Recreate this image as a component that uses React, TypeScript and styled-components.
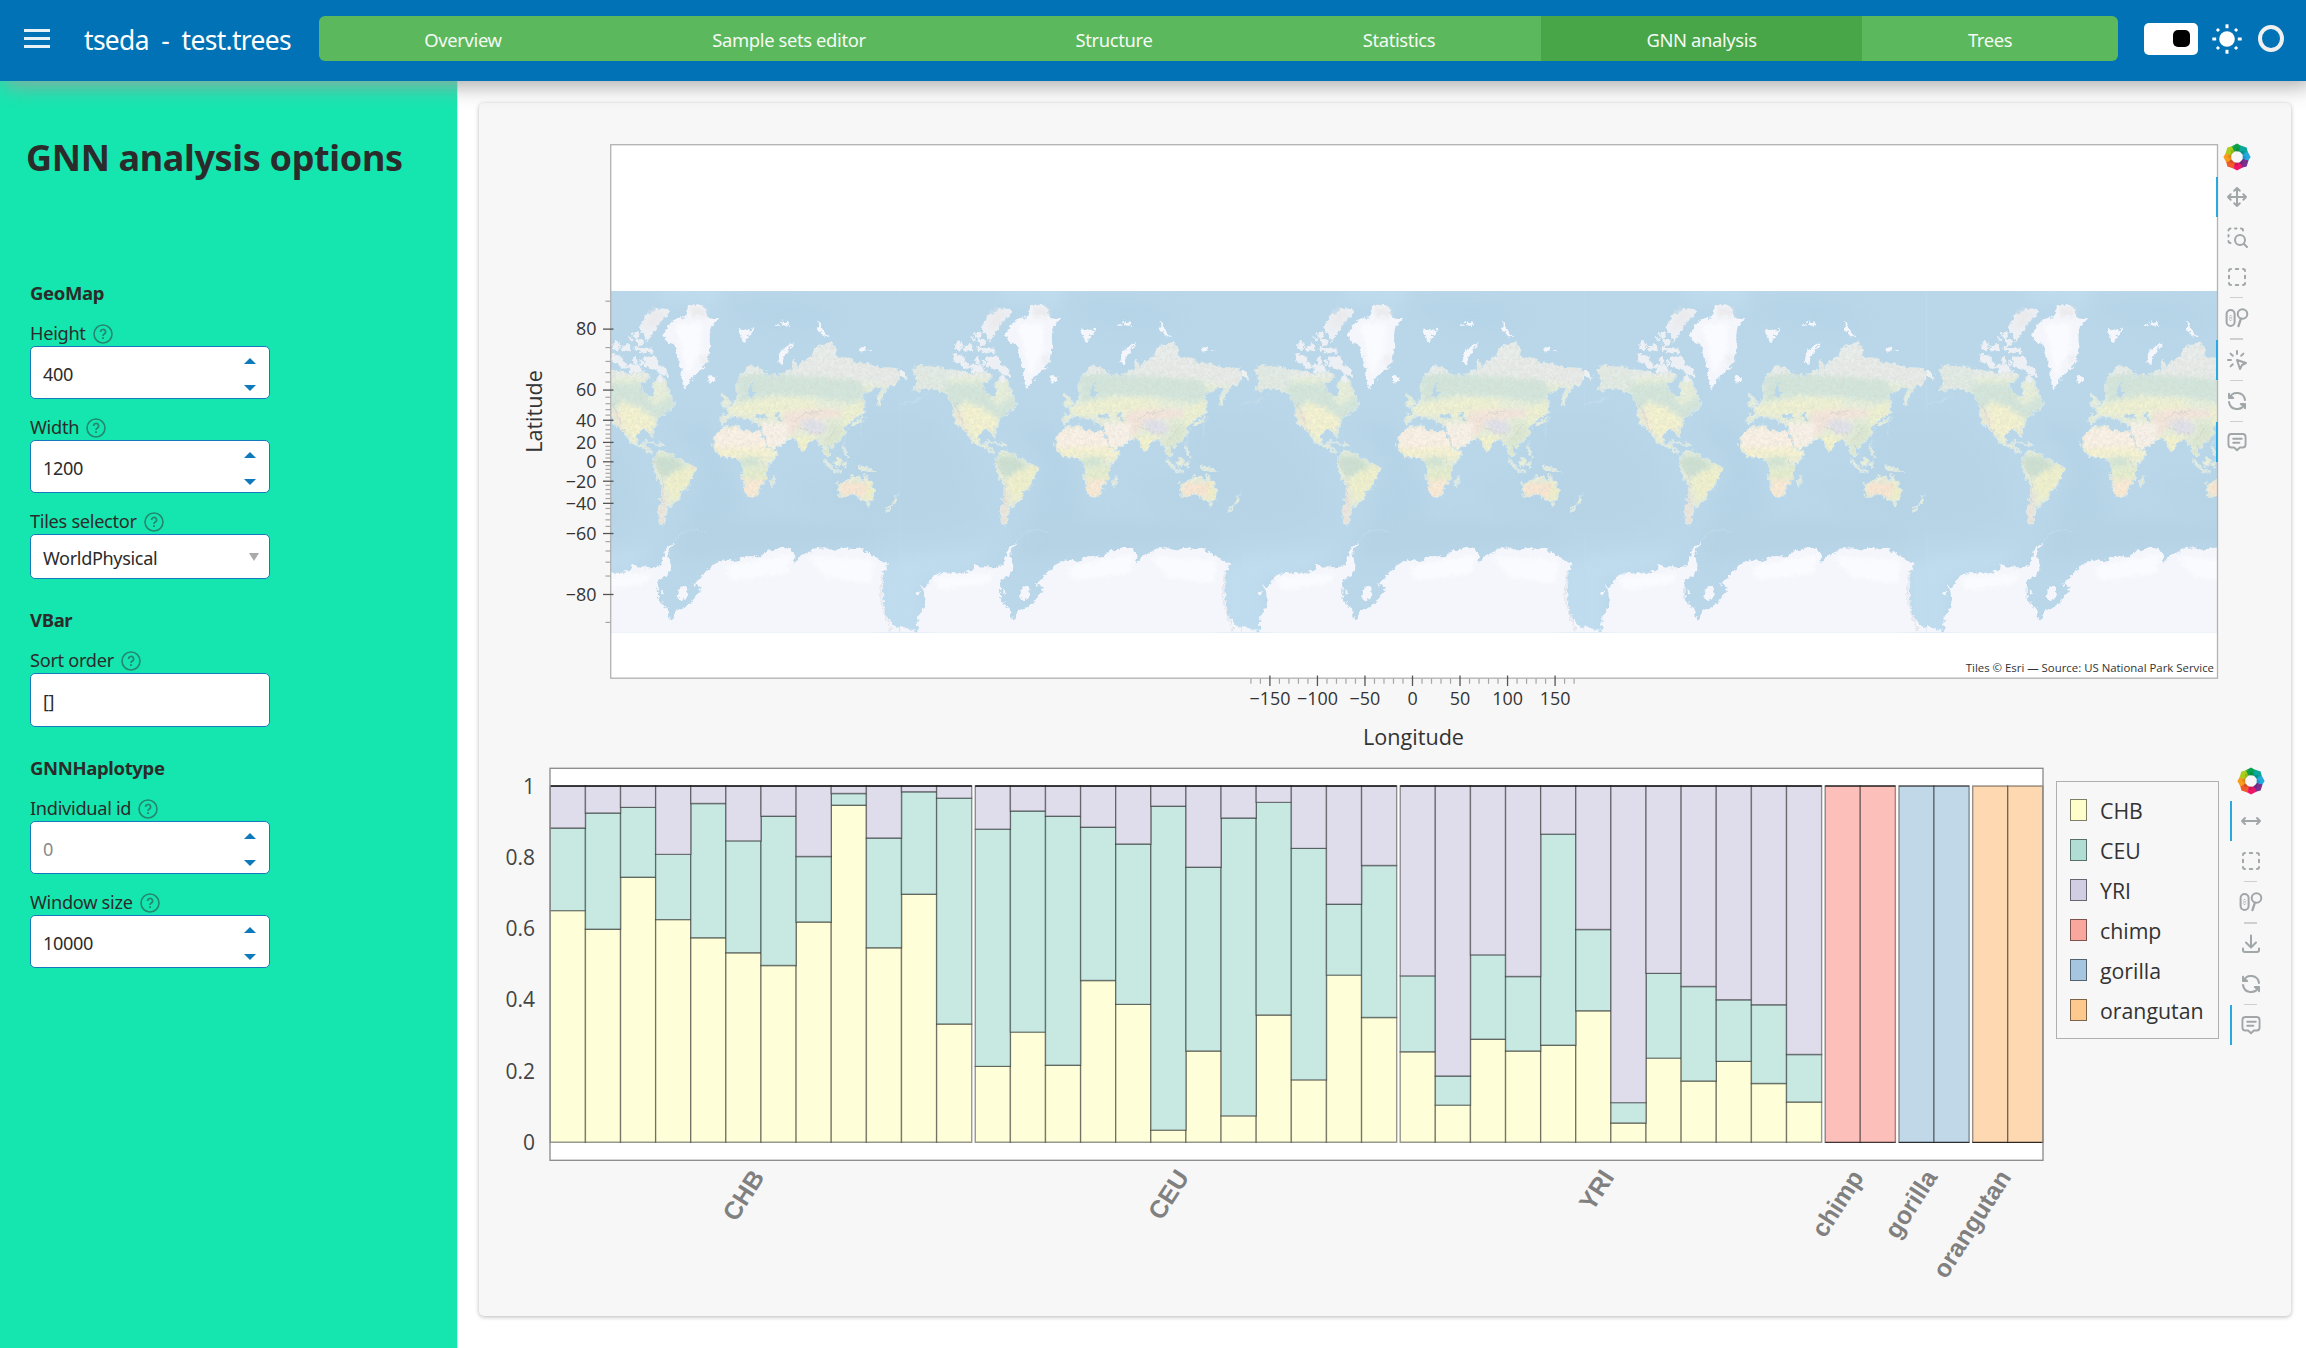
import React from "react";
import styled, { createGlobalStyle, css } from "styled-components";

const GlobalStyle = createGlobalStyle`
  *, *::before, *::after { box-sizing: border-box; }
  html, body { margin: 0; padding: 0; background: #fff; }
  body {
    width: 2306px;
    height: 1348px;
    overflow: hidden;
    font-family: "Noto Sans", "Open Sans", sans-serif;
    color: #2b2b2b;
  }
`;

const plotFont = `"Open Sans", "Noto Sans", sans-serif`;

/* ---------- page shell ---------- */

const Page = styled.div`
  display: flex;
  flex-direction: column;
  width: 2306px;
  height: 1348px;
`;

const Header = styled.header`
  display: flex;
  align-items: center;
  flex: none;
  height: 81px;
  padding: 0 21px 4px 24px;
  background: #0072b5;
  color: #fff;
  box-shadow: 5px 5px 20px rgba(160, 160, 160, 0.9);
  z-index: 2;
`;

const Burger = styled.div`
  display: flex;
  flex-direction: column;
  gap: 5px;
  width: 26px;
  margin-right: 34px;
`;

const BurgerLine = styled.span`
  height: 3px;
  background: #e6f1f8;
`;

const AppTitle = styled.div`
  width: 235px;
  flex: none;
  padding-top: 2px;
  font-size: 26.4px;
  line-height: 36px;
  letter-spacing: -0.65px;
  white-space: pre;
`;

const Tabs = styled.nav`
  display: flex;
  width: 1799px;
  height: 45px;
  border-radius: 6px;
  overflow: hidden;
  background: #5cb85c;
`;

const Tab = styled.div<{ $w: number; $active?: boolean }>`
  display: flex;
  align-items: center;
  justify-content: center;
  width: ${(p) => p.$w}px;
  padding-top: 2px;
  background: ${(p) => (p.$active ? "#48a548" : "transparent")};
  color: #f4faf4;
  font-size: 18.4px;
  letter-spacing: -0.37px;
`;

const Toggle = styled.div`
  display: flex;
  align-items: center;
  justify-content: flex-end;
  width: 54px;
  height: 32px;
  margin-left: 26px;
  padding-right: 8px;
  border-radius: 5px;
  background: #fff;
`;

const Knob = styled.span`
  width: 17px;
  height: 17px;
  border-radius: 5px;
  background: #000;
`;

const SunIcon = styled.svg`
  width: 30px;
  height: 30px;
  margin-left: 14px;
`;

const Busy = styled.span`
  width: 26px;
  height: 27px;
  margin-left: 16px;
  border: 4px solid #f0f0f0;
  border-radius: 50%;
`;

const Body = styled.div`
  display: flex;
  flex: 1;
  min-height: 0;
`;

/* ---------- sidebar ---------- */

const Sidebar = styled.aside`
  width: 458px;
  flex: none;
  padding: 0 30px;
  background: #15e6af;
  border-right: 1px solid #e0e4e3;
`;

const SideTitle = styled.h1`
  height: 171px;
  margin: 0 -10px 0 -4px;
  padding-top: 53px;
  font-size: 36px;
  line-height: 48px;
  font-weight: 700;
  letter-spacing: -0.35px;
  white-space: nowrap;
`;

const GroupTitle = styled.h2`
  height: 67px;
  margin: 0;
  padding-top: 29px;
  font-size: 18.5px;
  line-height: 24px;
  font-weight: 700;
  letter-spacing: -0.35px;
`;

const Fields = styled.div`
  display: flex;
  flex-direction: column;
  gap: 14px;
  width: 240px;
`;

const FieldLabel = styled.label`
  display: flex;
  align-items: center;
  gap: 7px;
  height: 27px;
  padding-top: 1px;
  font-size: 18.2px;
  line-height: 26px;
  letter-spacing: -0.3px;
`;

const HelpSvg = styled.svg`
  width: 20px;
  height: 20px;
  margin-top: 2px;
  opacity: 0.6;
`;

const InputBox = styled.div<{ $h: number }>`
  display: flex;
  align-items: center;
  justify-content: space-between;
  height: ${(p) => p.$h}px;
  padding: 2px 13px 0 12px;
  border: 1px solid #1679bd;
  border-radius: 5px;
  background: #fff;
`;

const InputText = styled.span<{ $muted?: boolean }>`
  color: ${(p) => (p.$muted ? "#8a8a8a" : "#2b2b2b")};
  font-size: 18.1px;
  line-height: 24px;
  letter-spacing: -0.35px;
`;

const Spinner = styled.span`
  display: flex;
  flex-direction: column;
  gap: 21px;
  margin-top: 2px;
`;

const arrow = css`
  width: 0;
  height: 0;
  border-left: 6px solid transparent;
  border-right: 6px solid transparent;
`;

const ArrowUp = styled.i`
  ${arrow}
  border-bottom: 6px solid #0f7abb;
`;

const ArrowDown = styled.i`
  ${arrow}
  border-top: 6px solid #0f7abb;
`;

const SelectArrow = styled.i`
  ${arrow}
  border-left-width: 5px;
  border-right-width: 5px;
  border-top: 8px solid #aaa;
  margin: 0 -3px 2px 0;
`;

const Help = () => (
  <HelpSvg viewBox="0 0 20 20" fill="none" stroke="#2b4a45" strokeWidth="1.6">
    <circle cx="10" cy="10" r="9" />
    <path d="M7.6 7.900a2.500 2.400 0 1 1 3.700 2.100c-.9.5-1.300.9-1.300 1.900" strokeWidth="1.7" />
    <path d="M10 13.200v1.800" strokeWidth="1.900" />
  </HelpSvg>
);

type FieldKind = "spin" | "select" | "text";

const Field = ({ label, value, kind, muted }: { label: string; value: string; kind: FieldKind; muted?: boolean }) => (
  <div>
    <FieldLabel>
      {label}
      <Help />
    </FieldLabel>
    <InputBox $h={kind === "select" ? 45 : kind === "text" ? 54 : 53}>
      <InputText $muted={muted}>{value}</InputText>
      {kind === "spin" && (
        <Spinner>
          <ArrowUp />
          <ArrowDown />
        </Spinner>
      )}
      {kind === "select" && <SelectArrow />}
    </InputBox>
  </div>
);

/* ---------- main card ---------- */

const Main = styled.main`
  flex: 1;
  padding: 22px 14px 32px 21px;
`;

const Card = styled.section`
  display: flex;
  flex-direction: column;
  width: 1812px;
  height: 1213px;
  border-radius: 5px;
  background: #f7f7f7;
  box-shadow: 0 1px 4px rgba(0, 0, 0, 0.28);
`;

const Row = styled.div`
  display: flex;
  align-items: flex-start;
`;

const Plot = styled.svg`
  display: block;
  flex: none;
  overflow: visible;
  font-family: ${plotFont};
`;

const Toolbar = styled.div<{ $top: number; $left: number }>`
  display: flex;
  flex-direction: column;
  width: 41px;
  margin-top: ${(p) => p.$top}px;
  margin-left: ${(p) => p.$left}px;
  z-index: 1;
`;

const Tool = styled.div<{ $active?: boolean }>`
  display: flex;
  align-items: center;
  justify-content: center;
  height: 40px;
  border-left: 2px solid ${(p) => (p.$active ? "#26aae1" : "transparent")};
`;

const ToolSvg = styled.svg`
  width: 24px;
  height: 24px;
  margin-right: 1px;
  fill: none;
  stroke: #a1a6a9;
  stroke-width: 2;
  stroke-linecap: round;
  stroke-linejoin: round;
`;

const LogoSvg = styled.svg`
  width: 28px;
  height: 28px;
  margin-right: 2px;
`;

const Divider = styled.span`
  width: 13px;
  height: 1.34px;
  margin-left: 14px;
  background: #cfcfcf;
`;

const Legend = styled.div`
  display: flex;
  flex-direction: column;
  justify-content: space-between;
  width: 163px;
  height: 258px;
  margin: 28px 0 0 12px;
  padding: 8px 13px;
  border: 1.3px solid #b0b0b0;
  font-family: ${plotFont};
`;

const LegendItem = styled.div`
  display: flex;
  align-items: center;
  gap: 13px;
  height: 40px;
  color: #333;
  font-size: 21.3px;
`;

const Swatch = styled.span<{ $c: string }>`
  width: 17px;
  height: 22px;
  border: 1.3px solid rgba(0, 0, 0, 0.5);
  background: ${(p) => p.$c};
`;

/* ---------- toolbar icons ---------- */

const LOGO_COLORS = ["#0ba14a", "#0aa79d", "#25a9e0", "#7b2f8e", "#ee1668", "#f15a29", "#f99b1c", "#aacd1c"];

const Logo = () => (
  <LogoSvg viewBox="-14 -14 28 28">
    {LOGO_COLORS.map((c, i) => (
      <path key={c} d="M-5.6 -10.600L0 -13.600L5.200 -10.400L3.600 -5.600L-2.600 -5.800Z" fill={c} transform={`rotate(${i * 45})`} />
    ))}
    {LOGO_COLORS.map((c, i) => (
      <path key={c} d="M-5.200 -10.800L0.800 -9.400L-2.600 -5.600Z" fill={c} transform={`rotate(${i * 45})`} />
    ))}
    {LOGO_COLORS.map((c, i) => (
      <path key={c} d="M-2.600 -5.700L0.800 -9.400L3.400 -5.600Z" fill="#000" fillOpacity="0.12" transform={`rotate(${i * 45})`} />
    ))}
  </LogoSvg>
);

const ICONS: Record<string, React.ReactNode> = {
  pan: <path d="M3 12h18M12 3v18M18.300 9.200L21 12l-2.700 2.800M5.700 9.200L3 12l2.700 2.800M9.200 18.300L12 21l2.800-2.700M9.200 5.700L12 3l2.800 2.700" />,
  xpan: <path d="M3 12h18M18 9l3 3l-3 3M6 9l-3 3l3 3" />,
  boxZoom: (
    <>
      <circle cx="15" cy="15" r="5" />
      <path d="M19 19l3 3M3.500 5.500a2 2 0 0 1 2-2M10 3.500h1.500M16 3.500a2 2 0 0 1 2 2M3.500 10v1.500M3.500 16a2 2 0 0 0 2 2" />
    </>
  ),
  boxSelect: (
    <path d="M4 6a2 2 0 0 1 2-2M18 4a2 2 0 0 1 2 2M20 18a2 2 0 0 1-2 2M6 20a2 2 0 0 1-2-2M10.800 4h2.400M10.800 20h2.400M4 10.800v2.400M20 10.800v2.400" />
  ),
  wheel: (
    <>
      <rect x="1.600" y="4" width="8" height="16" rx="4" />
      <path d="M4.600 10.200l1-1l1 1M4.600 13.800l1 1l1-1M4.500 12h2.200" strokeWidth="0.900" />
      <circle cx="17.500" cy="8" r="4.800" />
      <path d="M15.800 13l-2.300 7" strokeWidth="2.400" />
    </>
  ),
  tap: (
    <path d="M3 12h3M12 3v3M7.800 7.800L5.600 5.600M16.200 7.800l2.200-2.200M7.800 16.200l-2.200 2.200M12 12l9 3l-4 2l-2 4z" />
  ),
  reset: (
    <path d="M20 11a8.100 8.100 0 0 0-15.500-2M4 4.800v4.200h4.200L5 6.500M4 13a8.100 8.100 0 0 0 15.500 2M20 19.200v-4.200h-4.200L19 17.500" />
  ),
  hover: (
    <path d="M18 4a3 3 0 0 1 3 3v7.500a3 3 0 0 1-3 3h-3l-3 2.800l-3-2.800h-3a3 3 0 0 1-3-3v-7.500a3 3 0 0 1 3-3zM8 8.700h9M8 12.700h6.500" transform="translate(0.6 0) scale(0.95 1)" />
  ),
  save: <path d="M4 16.500v1.500a2 2 0 0 0 2 2h12a2 2 0 0 0 2-2v-1.500M7 10.500l5 5l5-5M12 3.500v12" />,
};

type ToolSpec = { icon: string; active?: boolean } | "divider";

const Tools = ({ items, top, left }: { items: ToolSpec[]; top: number; left: number }) => (
  <Toolbar $top={top} $left={left}>
    <Tool>
      <Logo />
    </Tool>
    {items.map((t, i) =>
      t === "divider" ? (
        <Divider key={i} />
      ) : (
        <Tool key={i} $active={t.active}>
          <ToolSvg viewBox="0 0 24 24">{ICONS[t.icon]}</ToolSvg>
        </Tool>
      )
    )}
  </Toolbar>
);

/* ---------- world map ---------- */

const LAND = [
  "M40 270L48 262L60 256L80 260L100 258L125 264L150 268L180 275L215 280L240 276L265 280L275 290L262 305L245 312L248 328L270 345L285 352L290 335L285 310L300 290L320 300L330 330L345 360L350 380L330 392L318 400L300 415L292 440L285 452L284 472L277 462L272 450L255 448L240 455L235 470L240 488L248 494L262 488L262 500L272 508L282 520L272 516L252 502L240 496L222 490L212 478L203 462L190 448L178 440L166 425L160 400L158 375L145 350L125 332L95 325L78 322L60 333L42 328L50 300Z",
  "M292 520L310 512L325 515L340 520L352 530L375 540L395 556L412 560L411 575L396 595L390 620L370 635L362 655L350 665L340 675L330 680L325 700L320 712L320 733L310 733L303 715L302 690L308 665L312 640L312 615L302 600L290 575L285 550Z",
  "M483 455L500 440L540 435L548 448L565 452L580 455L605 452L610 468L618 488L635 512L660 515L650 535L632 555L625 570L628 595L610 612L608 628L595 648L573 652L562 635L558 615L550 590L555 565L548 545L538 535L520 528L490 530L475 515L465 500L467 475Z",
  "M537 345L533 320L550 285L575 258L600 262L625 280L620 290L640 285L665 290L690 270L705 275L710 240L720 265L735 245L750 230L765 225L770 205L800 195L820 185L835 210L830 230L880 235L885 250L930 250L965 262L1010 265L1030 275L1050 295L1032 300L1020 302L1010 320L990 318L975 345L967 372L960 376L958 350L975 322L950 322L930 335L912 345L918 372L915 395L900 410L885 418L870 430L858 445L862 460L845 480L830 490L826 505L812 492L806 497L818 528L806 532L796 512L790 495L775 478L758 480L745 495L737 516L725 500L715 480L700 475L682 480L670 492L640 510L628 495L612 455L615 438L600 432L585 428L588 418L560 420L545 405L535 412L520 408L505 420L495 432L487 425L490 405L510 400L505 385L528 372Z",
  "M490 376L496 360L492 348L502 345L515 362L512 378L496 382Z",
  "M640 592L652 588L649 608L642 622L637 612Z",
  "M838 612L852 606L870 600L880 588L892 590L905 590L908 600L914 602L920 582L928 595L938 610L948 628L946 645L938 660L925 664L908 656L900 648L888 642L870 646L860 652L842 650L843 632Z",
  "M926 668L936 668L932 680Z",
  "M1008 648L1020 660L1012 670L1004 668ZM1004 672L996 688L984 696L990 684Z",
  "M796 538L812 550L826 566L818 566L804 552ZM828 545L846 530L852 542L842 560L830 556ZM822 568L850 572L850 576L824 572ZM856 548L866 546L862 566L856 560ZM900 558L920 560L944 570L952 577L928 572L908 570ZM855 500L866 510L868 530L860 520Z",
  "M882 432L892 424L904 422L914 408L912 422L898 430L886 438ZM912 392L922 396L914 404Z",
  "M262 485L290 488L296 492L278 490ZM300 490L320 492L320 496L302 495Z",
];

const ICE = [
  "M320 155L345 120L385 110L390 80L425 72L445 90L450 115L478 118L460 140L455 165L456 200L445 250L420 275L400 295L392 310L385 325L375 318L368 265L360 230L350 195L330 185L315 168Z",
  "M447 291L458 288L472 292L470 302L454 304Z",
  "M543 150L560 146L570 152L588 142L580 165L565 172L562 190L552 178Z",
  "M650 132L664 128L668 136L656 138ZM672 124L694 124L690 138L676 136Z",
  "M665 250L662 228L680 200L708 188L692 210L680 228L674 255Z",
  "M778 122L788 132L794 150L812 170L798 172L782 152Z",
  "M905 200L922 204L920 214L908 214ZM928 208L942 210L940 214Z",
  "M55 1090L50 1020L75 970L72 940L65 912L80 922L95 890L130 875L185 882L220 870L222 852L240 862L295 860L310 850L325 805L350 780L330 820L340 860L330 890L300 900L300 950L315 975L330 985L340 1025L355 990L375 985L400 965L430 930L410 910L430 890L455 860L490 840L530 842L565 828L610 828L635 810L680 802L710 815L708 850L725 830L770 805L800 800L830 808L900 803L935 820L960 838L995 850L975 870L975 950L985 1010L1020 1045L1036 1056L1036 1090Z",
  "M-10 1038L20 1044L60 1056L60 1090L-10 1090Z",
  "M358 950L368 918L388 922L386 955L370 962Z",
  "M45 936L58 934L62 944L52 948ZM308 930L316 934L312 944Z",
];

const ARCTIC = [
  "M242 142L262 110L300 84L332 88L326 112L302 125L292 150L275 175L268 190L258 168Z",
  "M158 222L185 226L195 238L212 262L196 268L176 252L158 242Z",
  "M255 234L290 226L304 250L325 270L332 292L308 282L290 268L262 262Z",
  "M165 190L180 180L190 196L178 212L165 206ZM190 196L212 190L226 208L208 216L194 212ZM228 196L246 204L282 206L284 220L250 214L232 212ZM222 162L240 152L246 168L232 180ZM222 232L234 228L240 248L228 252ZM236 180L252 178L256 192L240 196ZM214 166L224 176L216 184Z",
  "M210 256L240 250L250 268L262 274L240 276L216 276ZM246 236L258 250L252 264ZM302 286L318 290L314 308L300 306Z",
];

const WorldTile = () => (
  <g clipPath="url(#tileClip)">
    <rect x="-2" y="33" width="1030" height="1024" fill="#bad7ea" />
    <g filter="url(#ocean)">
      <path d="M-160 400L80 400L200 520L250 700L120 760L-160 760Z" fill="#b6d4e6" />
      <path d="M900 400L1200 400L1200 760L960 760L760 700L700 600L820 600Z" fill="#b6d4e6" />
      <path d="M330 420L450 430L520 580L560 700L420 760L380 700L440 560Z" fill="#b5d3e6" />
      <path d="M360 740L640 720L900 740L1000 780L700 800L360 840Z" fill="#b5d2e4" />
      <path d="M480 60L760 60L860 120L700 160L560 120Z" fill="#b6d4e7" />
      <path d="M300 60L310 0L500 0L470 100L430 60Z" fill="#bfdcee" />
      <path d="M-160 840L300 800L200 870L60 900L80 1120L-160 1120Z" fill="#bfdcee" />
      <path d="M960 840L1200 840L1200 1120L960 1120Z" fill="#bfdcee" />
    </g>
    <g filter="url(#rough)">
      <g fill="none" stroke="#d0e3ee" strokeWidth="3" opacity="0.55">
        <path d="M0 372Q50 368 82 340M925 410Q900 440 910 470M1020 372Q1060 370 1100 340M1030 570Q1040 610 1015 650M350 780Q390 730 440 760M870 440Q850 500 870 550" />
      </g>
      <g stroke="#dbe9e8" strokeWidth="4" strokeLinejoin="round">
        {LAND.map((d) => (
          <path key={d} d={d} fill="#e8f0dc" />
        ))}
      </g>
      <path d="M-10 266L14 276L25 292L22 300L6 292L-10 288Z" fill="#edf1f0" />
      <g clipPath="url(#landClip)">
        <g filter="url(#soft)">
          <rect x="0" y="180" width="1060" height="110" fill="#eaeeed" />
          <path d="M40 250L150 265L150 330L40 340Z" fill="#e3ebe6" />
          <path d="M700 240L1060 240L1060 330L860 300L720 290Z" fill="#e9ecea" />
          <path d="M130 310L250 310L290 380L350 340L370 400L300 420L240 380L190 365L160 400L140 350Z" fill="#d3e6dc" />
          <path d="M530 290L620 275L760 290L900 300L930 340L900 370L760 350L640 345L540 370Z" fill="#d3e6dd" />
          <path d="M185 360L240 380L290 415L280 450L230 480L190 440Z" fill="#f5f3d0" />
          <path d="M160 385L190 395L200 450L175 430Z" fill="#f2e9d8" />
          <path d="M520 380L600 355L760 355L790 390L620 405L520 400Z" fill="#f0f2d3" />
          <path d="M680 395L760 385L880 388L850 410L740 425L700 470L670 450Z" fill="#f6e6dc" />
          <path d="M722 428L760 415L805 430L800 460L760 465Z" fill="#e0e1ec" />
          <path d="M700 470L780 465L740 520Z" fill="#f4f3cc" />
          <path d="M820 430L880 420L850 490L800 540L790 480Z" fill="#dde9d3" />
          <path d="M850 390L910 360L920 400L860 450Z" fill="#eff2d2" />
          <path d="M465 445L620 440L640 500L470 510Z" fill="#fcf1e6" />
          <path d="M605 430L690 430L690 480L640 515Z" fill="#faf2ea" />
          <path d="M460 504L640 500L665 520L620 540L490 535Z" fill="#f7f3d2" />
          <path d="M540 530L605 530L612 552L555 562Z" fill="#d2e5d5" />
          <path d="M545 565L635 560L635 600L555 600Z" fill="#e4edcd" />
          <path d="M550 600L620 595L600 655L560 655Z" fill="#fbead5" />
          <path d="M280 530L340 525L385 555L360 580L310 590Z" fill="#cbe0d2" />
          <path d="M350 570L420 555L400 620L340 670L320 610Z" fill="#f0f1cc" />
          <path d="M300 600L325 640L325 740L295 740Z" fill="#ede6e0" />
          <path d="M845 610L930 605L930 650L850 645Z" fill="#fae5d2" />
          <path d="M930 600L955 640L930 670L920 650Z" fill="#f0f0c8" />
        </g>
        <g fill="none" stroke="#cfcfcc" strokeWidth="3" opacity="0.7">
          <path d="M165 370L185 420L205 460M288 545L318 600L312 680M608 450L636 504M720 440L790 462M845 430L800 490M710 425L740 400L800 395M612 530L618 560" />
        </g>
        <rect x="0" y="180" width="1060" height="560" filter="url(#grain)" opacity="0.3" />
      </g>
      <g fill="#bad7ea">
        <path d="M592 405L606 400L614 406L628 404L628 414L600 416ZM650 400L660 394L666 402L662 412L672 420L664 424L656 412Z" />
        <path d="M565 345L575 320L590 302L580 325L596 340L580 350ZM268 318L280 312L286 335L280 348L262 340L250 325Z" />
      </g>
      <g fill="#eceff3">
        {ARCTIC.map((d) => (
          <path key={d} d={d} />
        ))}
      </g>
      <g fill="#f4f6fb">
        {ICE.map((d) => (
          <path key={d} d={d} />
        ))}
      </g>
      <g fill="#eaeaec" filter="url(#soft)">
        <path d="M395 82L440 82L448 110L400 108Z" />
        <path d="M428 230L446 228L436 262Z" />
        <path d="M280 90L325 95L290 140L265 140Z" />
      </g>
      <g fill="#fafbfe" filter="url(#soft)">
        <path d="M350 130L430 130L430 200L390 290L370 200Z" />
        <path d="M100 890L280 880L260 910L120 930Z" />
        <path d="M500 860L700 820L690 880L520 900Z" />
        <path d="M750 830L950 840L940 910L800 890Z" />
      </g>
      <path d="M972 870L968 950L984 1010L1000 1050" fill="none" stroke="#e4e6ec" strokeWidth="4" />
    </g>
    <rect x="1024.500" y="33" width="1.500" height="1023" fill="#c6deec" />
  </g>
);

const LON_X0 = 1412.5;
const LAT_Y0 = 461.8;
const WORLD = 342.2;

const lonX = (lon: number) => LON_X0 + (lon / 360) * WORLD;
const latY = (lat: number) =>
  LAT_Y0 - (WORLD / (2 * Math.PI)) * Math.log(Math.tan(Math.PI / 4 + (lat * Math.PI) / 360));

const range = (from: number, to: number, step: number) => {
  const out: number[] = [];
  for (let v = from; v <= to; v += step) out.push(v);
  return out;
};

const minus = (n: number) => String(n).replace("-", "−");

const MapPlot = () => (
  <Plot width={1739} height={650} viewBox="479 103 1739 650">
    <defs>
      <clipPath id="tileClip">
        <rect x="-1" y="33" width="1026.600" height="1023.500" />
      </clipPath>
      <clipPath id="frameClip">
        <rect x="611" y="145" width="1606" height="533" />
      </clipPath>
      <clipPath id="landClip">
        {LAND.map((d) => (
          <path key={d} d={d} />
        ))}
      </clipPath>
      <filter id="rough" x="-5%" y="-5%" width="110%" height="110%" colorInterpolationFilters="sRGB">
        <feTurbulence type="fractalNoise" baseFrequency="0.08" numOctaves="3" seed="4" result="n" />
        <feDisplacementMap in="SourceGraphic" in2="n" scale="20" xChannelSelector="R" yChannelSelector="G" />
      </filter>
      <filter id="ocean" filterUnits="userSpaceOnUse" x="-300" y="-100" width="1700" height="1400" colorInterpolationFilters="sRGB">
        <feGaussianBlur stdDeviation="22" />
      </filter>
      <filter id="soft" x="-20%" y="-20%" width="140%" height="140%" colorInterpolationFilters="sRGB">
        <feGaussianBlur stdDeviation="7" />
      </filter>
      <filter id="grain" x="0" y="0" width="100%" height="100%" colorInterpolationFilters="sRGB">
        <feTurbulence type="fractalNoise" baseFrequency="0.11" numOctaves="3" seed="9" />
        <feColorMatrix values="0 0 0 0 0.8  0 0 0 0 0.82  0 0 0 0 0.77  3 0 0 0 -1.1" />
      </filter>
    </defs>
    <rect x="611" y="145" width="1606" height="533" fill="#fff" />
    <g clipPath="url(#frameClip)">
      {[-1, 0, 1, 2, 3].map((k) => (
        <g key={k} transform={`translate(${900 + WORLD * k} 280) scale(0.33367 0.33367)`}>
          <WorldTile />
        </g>
      ))}
    </g>
    <rect x="610.700" y="144.700" width="1606.800" height="533.500" fill="none" stroke="#b3b3b3" strokeWidth="1.330" />
    <g stroke="#555" strokeWidth="1.300">
      {range(-80, 80, 20).map((v) => (
        <path key={v} d={`M603 ${latY(v)}H613.500`} />
      ))}
      {range(-150, 150, 50).map((v) => (
        <path key={v} d={`M${lonX(v)} 675.500V686`} />
      ))}
    </g>
    <g stroke="#a5a5a5" strokeWidth="1.200">
      {range(-84, 84, 4)
        .filter((v) => v % 20 !== 0)
        .map((v) => (
          <path key={v} d={`M605.500 ${latY(v)}H610.500`} />
        ))}
      {range(-170, 170, 10)
        .filter((v) => v % 50 !== 0)
        .map((v) => (
          <path key={v} d={`M${lonX(v)} 678.500V683.800`} />
        ))}
    </g>
    <g fill="#333" fontSize="17.900">
      {range(-80, 80, 20).map((v) => (
        <text key={v} x="596.500" y={latY(v) + 6.300} textAnchor="end">
          {minus(v)}
        </text>
      ))}
      {range(-150, 150, 50).map((v) => (
        <text key={v} x={lonX(v)} y="705.300" textAnchor="middle">
          {minus(v)}
        </text>
      ))}
    </g>
    <g fill="#333" fontSize="21.600" textAnchor="middle">
      <text x="1413.500" y="745">Longitude</text>
      <text transform="translate(541.500 411.500) rotate(-90)">Latitude</text>
    </g>
    <text x="2214" y="672" textAnchor="end" fontSize="11.400" fill="#333">
      Tiles © Esri — Source: US National Park Service
    </text>
  </Plot>
);

/* ---------- stacked bars ---------- */

const POPS = [
  { name: "CHB", color: "#fdfec9" },
  { name: "CEU", color: "#b0ded5" },
  { name: "YRI", color: "#d1cde2" },
  { name: "chimp", color: "#f9a79c" },
  { name: "gorilla", color: "#a6c5de" },
  { name: "orangutan", color: "#fdc98f" },
];

const BAR_FILL = ["#fefed9", "#c7e9e2", "#dfddeb", "#fdbfb9", "#c1d8e8", "#fed8b0"];

/* cumulative tops of the CHB and CEU shares for every sample */
const CHB: [number, number][] = [
  [0.65, 0.882], [0.598, 0.924], [0.744, 0.94], [0.625, 0.808], [0.574, 0.951], [0.532, 0.846],
  [0.496, 0.915], [0.618, 0.802], [0.946, 0.979], [0.546, 0.854], [0.696, 0.984], [0.332, 0.966],
];
const CEU: [number, number][] = [
  [0.213, 0.879], [0.309, 0.93], [0.216, 0.915], [0.454, 0.884], [0.387, 0.837], [0.034, 0.943],
  [0.256, 0.772], [0.074, 0.91], [0.357, 0.954], [0.175, 0.825], [0.469, 0.668], [0.35, 0.777],
];
const YRI: [number, number][] = [
  [0.254, 0.467], [0.104, 0.186], [0.289, 0.526], [0.256, 0.465], [0.272, 0.865], [0.369, 0.597],
  [0.054, 0.111], [0.236, 0.474], [0.172, 0.437], [0.227, 0.4], [0.165, 0.386], [0.113, 0.246],
];

const mixed = (rows: [number, number][]) => rows.map(([a, b]) => [0, a, b, 1, 1, 1, 1]);
const GROUPS: number[][][] = [
  mixed(CHB),
  mixed(CEU),
  mixed(YRI),
  [3, 3].map(() => [0, 0, 0, 0, 1, 1, 1]),
  [4, 4].map(() => [0, 0, 0, 0, 0, 1, 1]),
  [5, 5].map(() => [0, 0, 0, 0, 0, 0, 1]),
];

const BAR_X0 = 550.3;
const BAR_W = 35.12;
const barY = (v: number) => 1142.2 - v * 356.2;

const layout = GROUPS.map((rows, g) => {
  const before = GROUPS.slice(0, g).reduce((n, r) => n + r.length, 0);
  const x = BAR_X0 + before * BAR_W + g * 0.1 * BAR_W;
  return { rows, x, center: x + (rows.length * BAR_W) / 2, name: POPS[g].name };
});

const BarPlot = () => (
  <Plot width={1565} height={563} viewBox="479 753 1565 563">
    <rect x="550" y="768.300" width="1493" height="392" fill="#fff" />
    <g stroke="#000" strokeOpacity="0.400" strokeWidth="1.400">
      {POPS.map((p, s) =>
        layout.map(({ rows, x, name }) =>
          rows.map((edges, i) => {
            const x1 = x + i * BAR_W;
            return (
              <path
                key={`${p.name}-${name}-${i}`}
                fill={BAR_FILL[s]}
                d={`M${x1} ${barY(edges[s])}H${x1 + BAR_W}V${barY(edges[s + 1])}H${x1}Z`}
              />
            );
          })
        )
      )}
    </g>
    <rect x="550" y="768.300" width="1493" height="392" fill="none" stroke="#8c8c8c" strokeWidth="1.330" />
    <g fill="#444" fontSize="21" textAnchor="end">
      {["0", "0.2", "0.4", "0.6", "0.8", "1"].map((t) => (
        <text key={t} x="535" y={barY(Number(t)) + 7.600}>
          {t}
        </text>
      ))}
    </g>
    <g fill="#808080" fontFamily={`"Liberation Sans", Arial, sans-serif`} fontWeight="700" fontSize="25" textAnchor="end">
      {layout.map(({ name, center }) => (
        <text key={name} transform={`translate(${center - 3} 1172.500) rotate(-57.300)`} y="8.500">
          {name}
        </text>
      ))}
    </g>
  </Plot>
);

/* ---------- app ---------- */

const TABS = [
  { label: "Overview", w: 288 },
  { label: "Sample sets editor", w: 364 },
  { label: "Structure", w: 286 },
  { label: "Statistics", w: 284 },
  { label: "GNN analysis", w: 321, active: true },
  { label: "Trees", w: 256 },
];

const MAP_TOOLS: ToolSpec[] = [
  { icon: "pan", active: true },
  { icon: "boxZoom" },
  { icon: "boxSelect" },
  "divider",
  { icon: "wheel" },
  "divider",
  { icon: "tap", active: true },
  "divider",
  { icon: "reset" },
  "divider",
  { icon: "hover", active: true },
];

const BAR_TOOLS: ToolSpec[] = [
  { icon: "xpan", active: true },
  { icon: "boxSelect" },
  "divider",
  { icon: "wheel" },
  "divider",
  { icon: "save" },
  { icon: "reset" },
  "divider",
  { icon: "hover", active: true },
];

export default function App() {
  return (
    <Page>
      <GlobalStyle />
      <Header>
        <Burger>
          <BurgerLine />
          <BurgerLine />
          <BurgerLine />
        </Burger>
        <AppTitle>{"tseda  -  test.trees"}</AppTitle>
        <Tabs>
          {TABS.map((t) => (
            <Tab key={t.label} $w={t.w} $active={t.active}>
              {t.label}
            </Tab>
          ))}
        </Tabs>
        <Toggle>
          <Knob />
        </Toggle>
        <SunIcon viewBox="-15 -15 30 30" stroke="#fff" strokeWidth="3">
          <circle r="7.800" fill="#fff" stroke="none" />
          {range(0, 315, 45).map((a) => (
            <path key={a} d={a % 90 ? "M0 -14.200V-11.400" : "M0 -14.700V-10.800"} transform={`rotate(${a})`} />
          ))}
        </SunIcon>
        <Busy />
      </Header>
      <Body>
        <Sidebar>
          <SideTitle>GNN analysis options</SideTitle>
          <GroupTitle>GeoMap</GroupTitle>
          <Fields>
            <Field label="Height" value="400" kind="spin" />
            <Field label="Width" value="1200" kind="spin" />
            <Field label="Tiles selector" value="WorldPhysical" kind="select" />
          </Fields>
          <GroupTitle>VBar</GroupTitle>
          <Fields>
            <Field label="Sort order" value="[]" kind="text" />
          </Fields>
          <GroupTitle>GNNHaplotype</GroupTitle>
          <Fields>
            <Field label="Individual id" value="0" kind="spin" muted />
            <Field label="Window size" value="10000" kind="spin" />
          </Fields>
        </Sidebar>
        <Main>
          <Card>
            <Row>
              <MapPlot />
              <Tools items={MAP_TOOLS} top={34} left={-2} />
            </Row>
            <Row>
              <BarPlot />
              <Legend>
                {POPS.map((p) => (
                  <LegendItem key={p.name}>
                    <Swatch $c={p.color} />
                    {p.name}
                  </LegendItem>
                ))}
              </Legend>
              <Tools items={BAR_TOOLS} top={8} left={11} />
            </Row>
          </Card>
        </Main>
      </Body>
    </Page>
  );
}
